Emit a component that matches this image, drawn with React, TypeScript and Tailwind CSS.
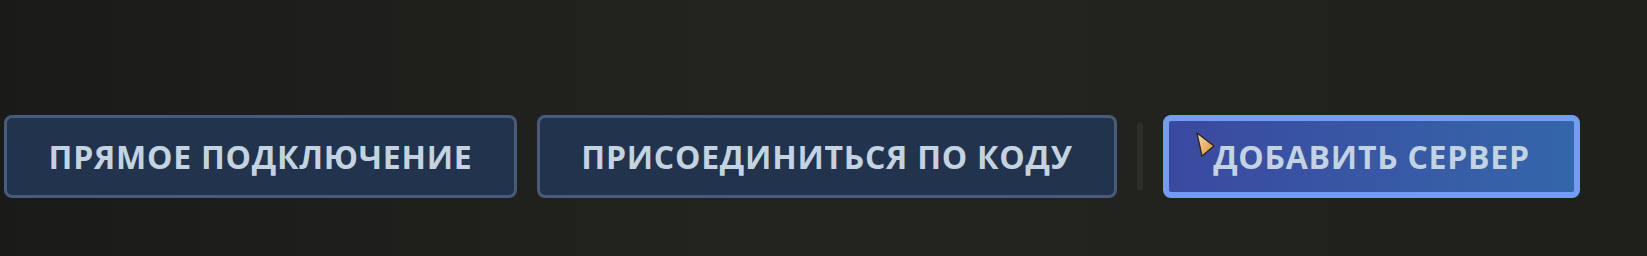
const buttons = [
  { label: "ПРЯМОЕ ПОДКЛЮЧЕНИЕ", width: "w-[513px]" },
  { label: "ПРИСОЕДИНИТЬСЯ ПО КОДУ", width: "w-[580px]" },
];

function Cursor() {
  return (
    <svg className="absolute left-[27px] top-[11px]" width="20" height="26" viewBox="0 0 20 26">
      <defs>
        <linearGradient id="cur" x1="0" y1="0" x2="1" y2="1">
          <stop offset="0" stopColor="#fbe3a8" />
          <stop offset="1" stopColor="#e0892b" />
        </linearGradient>
      </defs>
      <path d="M1 1 L18 14 L6 24 Z" fill="url(#cur)" stroke="#2a2218" strokeWidth="1.2" strokeLinejoin="round" />
    </svg>
  );
}

export default function App() {
  return (
    <div
      className="h-[256px] w-full bg-gradient-to-r from-[#1a1a19] via-[#24241f] to-[#1f1f1c] pt-[115px] pl-[4px]"
      style={{ fontFamily: '"Open Sans", "Noto Sans", sans-serif' }}
    >
      <div className="flex items-center gap-5">
        {buttons.map(({ label, width }) => (
          <button
            key={label}
            className={`${width} h-[83px] rounded-[8px] border-[3px] border-[#475b7a] bg-[#22334d] text-[32px] font-bold tracking-[0.75px] text-[#c3d3df]`}
          >
            {label}
          </button>
        ))}
        <div className="h-[69px] w-[6px] rounded-sm bg-[#2d2e2a]" />
        <button className="relative h-[83px] w-[417px] rounded-[8px] border-[6px] border-[#729cf6] bg-gradient-to-r from-[#3a49a0] to-[#3466a9] text-[32px] font-bold tracking-[0.75px] text-[#c3d3df]">
          ДОБАВИТЬ СЕРВЕР
          <Cursor />
        </button>
      </div>
    </div>
  );
}
